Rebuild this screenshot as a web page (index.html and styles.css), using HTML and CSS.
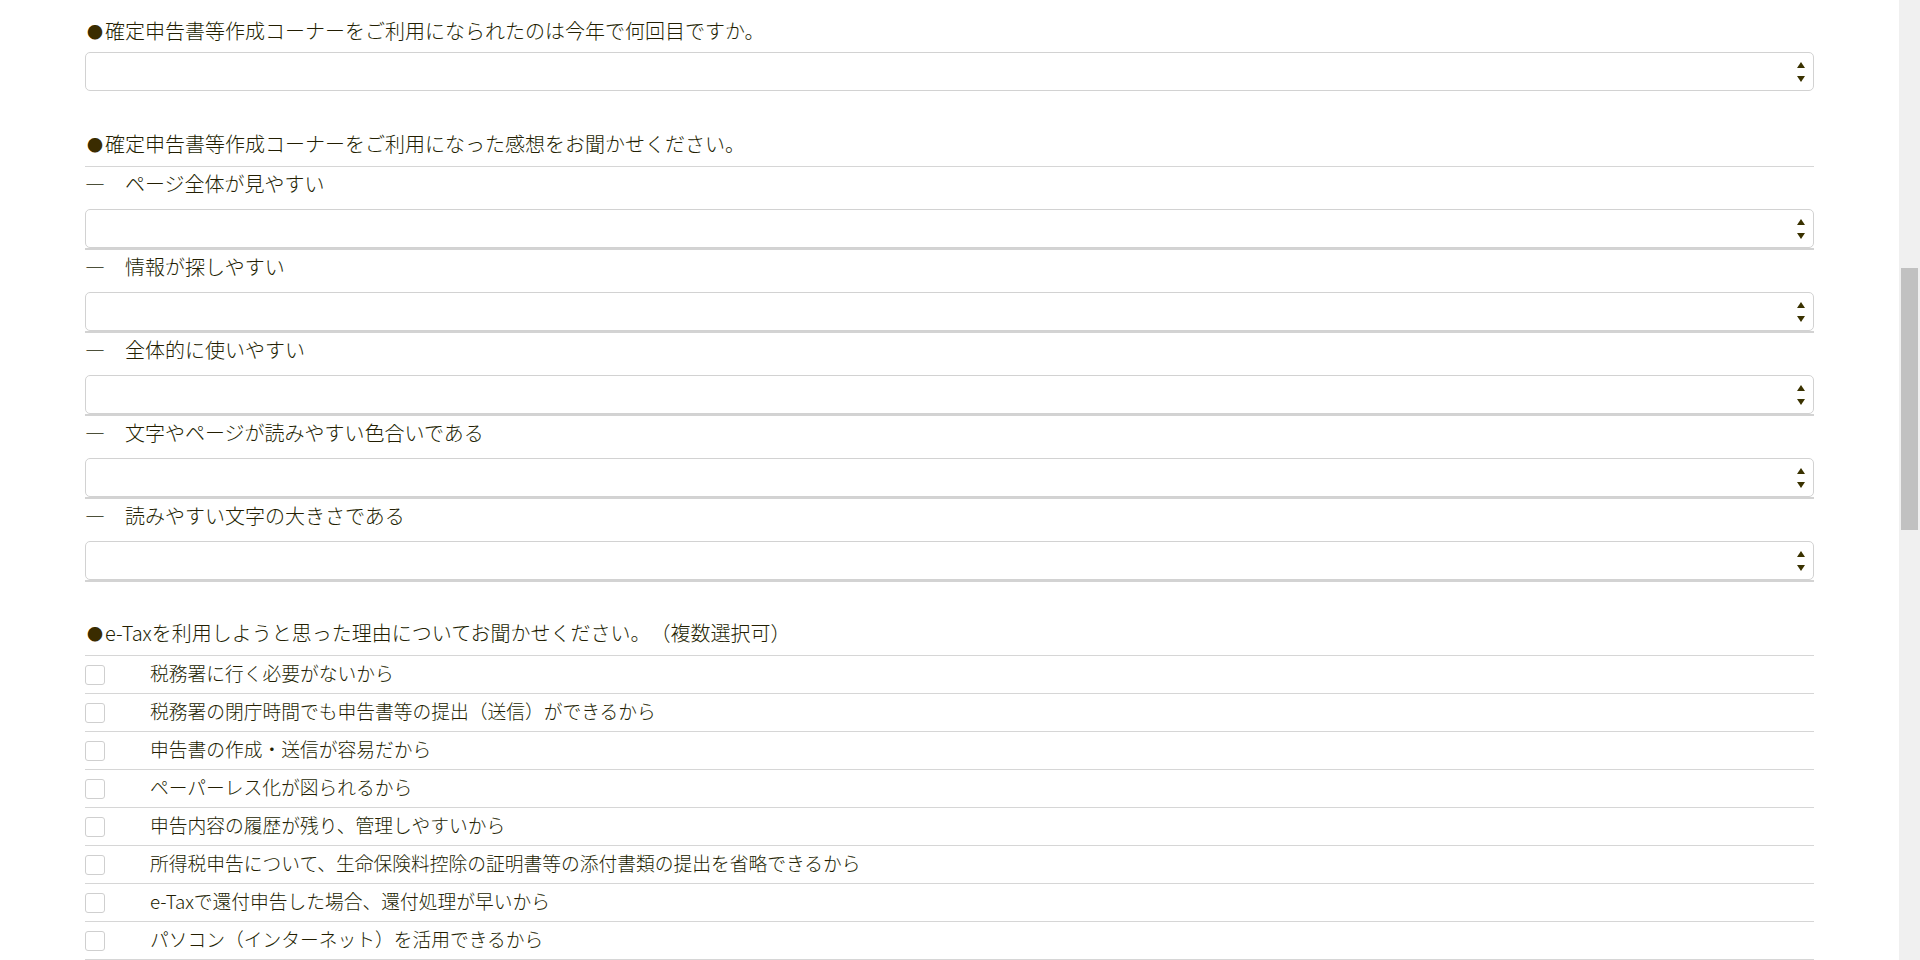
FILE: index.html
```html
<!DOCTYPE html>
<html lang="ja">
<head>
<meta charset="utf-8">
<title>アンケート</title>
<link rel="stylesheet" href="styles.css">
</head>
<body>
<main class="page">
  <section class="q q--first">
    <h2 class="q-title"><span class="mark">●</span>確定申告書等作成コーナーをご利用になられたのは今年で何回目ですか。</h2>
    <div class="select-wrap">
      <select class="select"><option></option></select>
      <svg class="arrows" width="8" height="20" viewBox="0 0 8 20"><polygon points="4,0 8,6 0,6"/><polygon points="0,14 8,14 4,20"/></svg>
    </div>
  </section>

  <section class="q">
    <h2 class="q-title q-title--ruled"><span class="mark">●</span>確定申告書等作成コーナーをご利用になった感想をお聞かせください。</h2>
    <div class="rating-row">
      <p class="rating-label">―　ページ全体が見やすい</p>
      <div class="select-wrap select-wrap--ruled">
        <select class="select"><option></option></select>
        <svg class="arrows" width="8" height="20" viewBox="0 0 8 20"><polygon points="4,0 8,6 0,6"/><polygon points="0,14 8,14 4,20"/></svg>
      </div>
    </div>
    <div class="rating-row">
      <p class="rating-label">―　情報が探しやすい</p>
      <div class="select-wrap select-wrap--ruled">
        <select class="select"><option></option></select>
        <svg class="arrows" width="8" height="20" viewBox="0 0 8 20"><polygon points="4,0 8,6 0,6"/><polygon points="0,14 8,14 4,20"/></svg>
      </div>
    </div>
    <div class="rating-row">
      <p class="rating-label">―　全体的に使いやすい</p>
      <div class="select-wrap select-wrap--ruled">
        <select class="select"><option></option></select>
        <svg class="arrows" width="8" height="20" viewBox="0 0 8 20"><polygon points="4,0 8,6 0,6"/><polygon points="0,14 8,14 4,20"/></svg>
      </div>
    </div>
    <div class="rating-row">
      <p class="rating-label">―　文字やページが読みやすい色合いである</p>
      <div class="select-wrap select-wrap--ruled">
        <select class="select"><option></option></select>
        <svg class="arrows" width="8" height="20" viewBox="0 0 8 20"><polygon points="4,0 8,6 0,6"/><polygon points="0,14 8,14 4,20"/></svg>
      </div>
    </div>
    <div class="rating-row">
      <p class="rating-label">―　読みやすい文字の大きさである</p>
      <div class="select-wrap select-wrap--ruled">
        <select class="select"><option></option></select>
        <svg class="arrows" width="8" height="20" viewBox="0 0 8 20"><polygon points="4,0 8,6 0,6"/><polygon points="0,14 8,14 4,20"/></svg>
      </div>
    </div>
  </section>

  <section class="q q--checks">
    <h2 class="q-title q-title--ruled"><span class="mark">●</span>e-Taxを利用しようと思った理由についてお聞かせください。（複数選択可）</h2>
    <ul class="checks">
      <li class="check-row"><span class="checkbox"></span><span class="check-text">税務署に行く必要がないから</span></li>
      <li class="check-row"><span class="checkbox"></span><span class="check-text">税務署の閉庁時間でも申告書等の提出（送信）ができるから</span></li>
      <li class="check-row"><span class="checkbox"></span><span class="check-text">申告書の作成・送信が容易だから</span></li>
      <li class="check-row"><span class="checkbox"></span><span class="check-text">ペーパーレス化が図られるから</span></li>
      <li class="check-row"><span class="checkbox"></span><span class="check-text">申告内容の履歴が残り、管理しやすいから</span></li>
      <li class="check-row"><span class="checkbox"></span><span class="check-text">所得税申告について、生命保険料控除の証明書等の添付書類の提出を省略できるから</span></li>
      <li class="check-row"><span class="checkbox"></span><span class="check-text">e-Taxで還付申告した場合、還付処理が早いから</span></li>
      <li class="check-row"><span class="checkbox"></span><span class="check-text">パソコン（インターネット）を活用できるから</span></li>
    </ul>
  </section>
</main>
<div class="scrollbar"><div class="scrollbar-thumb"></div></div>
</body>
</html>
```

FILE: styles.css
```css
html, body {
  margin: 0;
  padding: 0;
  overflow: hidden;
  background: #ffffff;
}

body {
  font-family: "Noto Sans CJK JP", "Noto Sans", sans-serif;
  font-weight: 300;
  color: #231e02;
  width: 1899px;
  text-spacing-trim: space-all;
}

.page {
  width: 1729px;
  margin: 0 auto;
  padding-top: 14px;
}

.q {
  margin-top: 38px;
}

.q--first {
  margin-top: 0;
}

.q--checks {
  margin-top: 36px;
}

.q-title {
  margin: 0 0 4px;
  font-size: 20px;
  font-weight: 300;
  line-height: 34px;
  white-space: nowrap;
}

.q-title--ruled {
  margin-bottom: 0;
  line-height: 30px;
  padding-bottom: 7px;
  border-bottom: 1px solid #d6d6d6;
}

.mark {
  display: inline-block;
  width: 20px;
  text-align: center;
  font-size: 16px;
  color: #3a2c00;
  vertical-align: top;
}

.select-wrap {
  position: relative;
  height: 39px;
}

.select-wrap--ruled {
  border-bottom: 2px solid #d3d3d3;
}

.select {
  display: block;
  width: 100%;
  height: 39px;
  margin: 0;
  padding: 0 30px 0 10px;
  box-sizing: border-box;
  border: 1px solid #d2d2d2;
  border-radius: 5px;
  background: #ffffff;
  -webkit-appearance: none;
  appearance: none;
  font: inherit;
  color: inherit;
}

.arrows {
  position: absolute;
  right: 9px;
  top: 10px;
  fill: #3a3200;
}

.rating-row {
  display: flex;
  flex-direction: column;
}

.rating-label {
  margin: 0;
  font-size: 20px;
  line-height: 34px;
  padding-bottom: 8px;
  white-space: pre;
}

.checks {
  list-style: none;
  margin: 0;
  padding: 0;
}

.check-row {
  display: flex;
  align-items: center;
  height: 37px;
  border-bottom: 1px solid #d6d6d6;
  font-size: 18.75px;
}

.checkbox {
  width: 18px;
  height: 18px;
  border: 1px solid #cfcfcf;
  border-radius: 3px;
  background: #ffffff;
  flex: none;
}

.check-text {
  margin-left: 45px;
  line-height: 26px;
  padding-bottom: 4px;
  white-space: nowrap;
}

.scrollbar {
  position: fixed;
  top: 0;
  right: 0;
  width: 21px;
  height: 960px;
  background: #f0f0f0;
}

.scrollbar-thumb {
  position: absolute;
  left: 2px;
  top: 268px;
  width: 17px;
  height: 262px;
  background: #c1c1c1;
}
```
